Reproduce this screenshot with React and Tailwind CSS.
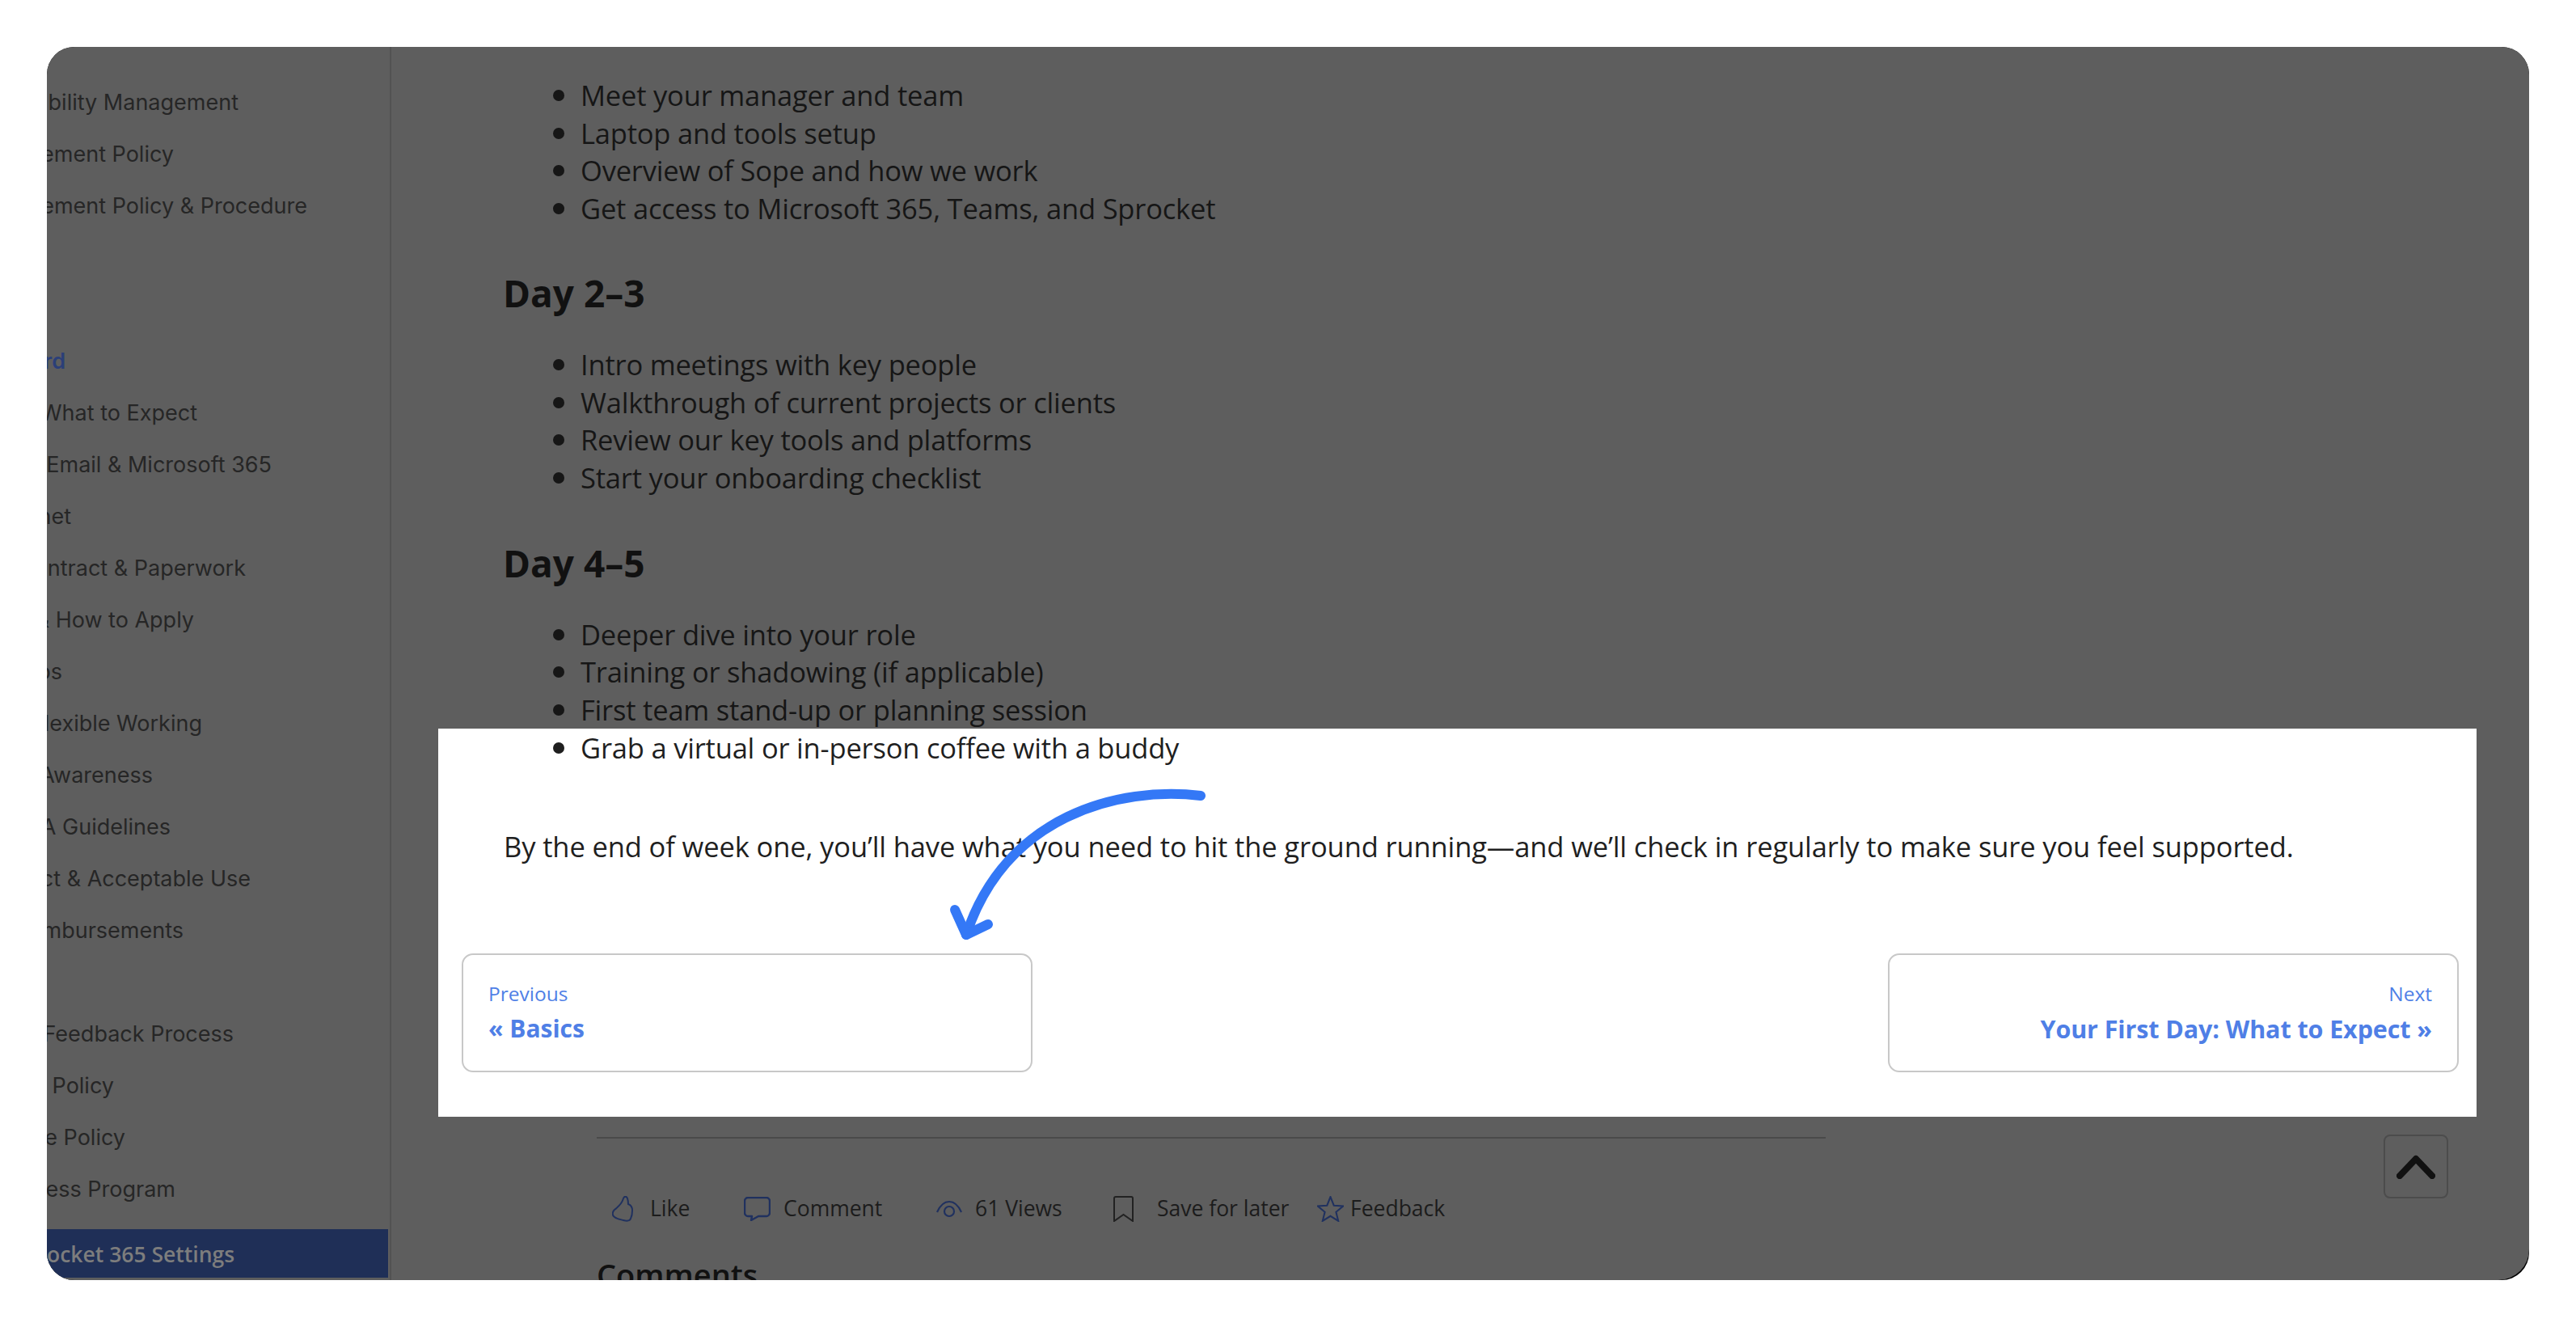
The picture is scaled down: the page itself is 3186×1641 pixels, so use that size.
const body = '"Open Sans","Noto Sans",sans-serif';

const rows = [
  ['bility Management', 'w-[237px]'],
  ['ement Policy', 'w-[157px]'],
  ['ement Policy & Procedure', 'w-[322px]'],
  ['', 'w-[10px]'],
  ['', 'w-[10px]'],
  ['rd', 'w-[23px] font-semibold text-[#2b3f78]'],
  ['What to Expect', 'w-[186px]'],
  ['Email & Microsoft 365', 'w-[278px]'],
  ['net', 'w-[30px]'],
  ['ntract & Paperwork', 'w-[246px]'],
  ['& How to Apply', 'w-[182px]'],
  ['ps', 'w-[19px]'],
  ['lexible Working', 'w-[192px]'],
  ['Awareness', 'w-[131px]'],
  ['A Guidelines', 'w-[153px]'],
  ['ct & Acceptable Use', 'w-[252px]'],
  ['mbursements', 'w-[169px]'],
  ['', 'w-[10px]'],
  ['Feedback Process', 'w-[231px]'],
  ['Policy', 'w-[83px]'],
  ['e Policy', 'w-[97px]'],
  ['ess Program', 'w-[159px]'],
];

function Li({ children }) {
  return (
    <li className="flex h-[46.5px] items-center">
      <span className="ml-[60px] mr-[20px] h-[14px] w-[14px] shrink-0 rounded-full bg-current" />
      <span>{children}</span>
    </li>
  );
}

function Action({ icon, label, className }) {
  return (
    <div className={'flex items-center ' + className}>
      {icon}
      <span>{label}</span>
    </div>
  );
}

const navy = '#20315f';

export default function App() {
  return (
    <div className="h-[1641px] w-[3186px] overflow-hidden bg-white pl-[58px] pt-[58px]">
      <div className="h-[1525px] w-[3070px] overflow-hidden rounded-[34px] bg-black">
        <div className="flex h-full w-full overflow-hidden rounded-br-[38px] bg-[#5e5e5e]">
          <aside className="flex w-[426px] shrink-0 flex-col border-r-2 border-[#525252] pb-[3px] pt-[37px] text-[27px] text-[#262626]" style={{ fontFamily: 'Inter, sans-serif' }}>
            {rows.map(([t, c], i) => (
              <div key={i} className={'flex h-[64px] items-center justify-end overflow-hidden whitespace-nowrap ' + c}>
                <span className="shrink-0">{t}</span>
              </div>
            ))}
            <div className="mr-[2px] mt-auto flex h-[60px] items-center overflow-hidden whitespace-nowrap bg-[#1f2f57] pt-[3px] text-[26.5px] font-semibold text-[#7d7d7d]">
              <span style={{ fontFamily: body }}>ocket 365 Settings</span>
            </div>
          </aside>

          <main className="relative min-w-0 flex-1 pl-[140px] pt-[37px] text-[34.5px] tracking-[-0.2px] text-[#161616]" style={{ fontFamily: body }}>
            <ul>
              <Li>Meet your manager and team</Li>
              <Li>Laptop and tools setup</Li>
              <Li>Overview of Sope and how we work</Li>
              <Li>Get access to Microsoft 365, Teams, and Sprocket</Li>
            </ul>
            <h3 className="-ml-[2px] mt-[51px] h-[60px] text-[46px] font-bold leading-[60px] tracking-normal text-[#111]">Day 2–3</h3>
            <ul className="mt-[36px]">
              <Li>Intro meetings with key people</Li>
              <Li>Walkthrough of current projects or clients</Li>
              <Li>Review our key tools and platforms</Li>
              <Li>Start your onboarding checklist</Li>
            </ul>
            <h3 className="-ml-[2px] mt-[52px] h-[60px] text-[46px] font-bold leading-[60px] tracking-normal text-[#111]">Day 4–5</h3>
            <ul className="mt-[35.5px]">
              <Li>Deeper dive into your role</Li>
              <Li>Training or shadowing (if applicable)</Li>
              <Li>First team stand-up or planning session</Li>
            </ul>

            <section className="-ml-[82px] h-[480px] w-[2521px] bg-white pl-[82px] text-[#1f1f1f]">
              <ul className="pt-[1px]">
                <Li>Grab a virtual or in-person coffee with a buddy</Li>
              </ul>
              <p className="-ml-[1px] mt-[75px] leading-[46px] tracking-[-0.12px]">By the end of week one, you’ll have what you need to hit the ground running—and we’ll check in regularly to make sure you feel supported.</p>
              <div className="-ml-[53px] mt-[109px] flex w-[2470px] justify-between tracking-normal">
                <div className="flex h-[147px] w-[706px] flex-col justify-center rounded-[14px] border-2 border-[#c8c8c8] px-[31px] text-[#4f7fe6]">
                  <span className="text-[24.5px] leading-[36px]">Previous</span>
                  <span className="mt-[4px] text-[30px] font-bold leading-[42px]">« Basics</span>
                </div>
                <div className="flex h-[147px] w-[706px] flex-col justify-center rounded-[14px] border-2 border-[#c8c8c8] px-[31px] text-right text-[#4f7fe6]">
                  <span className="text-[24.5px] leading-[36px]">Next</span>
                  <span className="mt-[4px] text-[30.5px] font-bold leading-[42px] tracking-[-0.1px]">Your First Day: What to Expect »</span>
                </div>
              </div>
            </section>

            <div className="ml-[114px] mt-[25px] h-[2px] w-[1520px] bg-[#4a4a4a]" />

            <div className="ml-[133px] mt-[62px] flex h-[50px] items-center text-[26.5px] tracking-normal text-[#1c1c1c]">
              <Action className="w-[163px] gap-[20px]" label="Like" icon={
                <svg width="27" height="32" viewBox="0 0 27 32" fill="none" stroke={navy} strokeWidth="2"><path d="M14 3C15 0 18 0 19 3C20 6 20 8 20 10C23 11 25 14 25 18C25 22 24 26 23 28C22 31 18 31 14 30C10 29 5 28 3 26C0 24 0 20 3 17C7 14 12 10 14 3Z" /></svg>
              } />
              <Action className="w-[238px] gap-[16px]" label="Comment" icon={
                <svg width="33" height="30" viewBox="0 0 33 30" fill="none" stroke={navy} strokeWidth="2.4" strokeLinejoin="round"><path d="M5 1h23c2 0 4 2 4 4v15c0 2-2 4-4 4H18l-9 5 1-5H5c-2 0-4-2-4-4V5c0-2 2-4 4-4Z" /></svg>
              } />
              <Action className="w-[219px] gap-[16px]" label="61 Views" icon={
                <svg width="32" height="22" viewBox="0 0 32 22" fill="none" stroke={navy} strokeWidth="2.2"><path d="M1 15C5 6 10 2 16 2C22 2 27 6 31 15" /><circle cx="16" cy="14" r="6" /></svg>
              } />
              <Action className="w-[252px] gap-[29px]" label="Save for later" icon={
                <svg width="25" height="32" viewBox="0 0 25 32" fill="none" stroke="#222" strokeWidth="2"><path d="M1 31V3c0-1 1-2 2-2h19c1 0 2 1 2 2v28l-11.500-8Z" /></svg>
              } />
              <Action className="gap-[8px]" label="Feedback" icon={
                <svg width="33" height="32" viewBox="0 0 32 31" fill="none" stroke={navy} strokeWidth="2"><path d="M16 1 20.100 11.300 31.200 12.100 22.700 19.200 25.400 29.900 16 24 6.600 29.900 9.300 19.200.8 12.100 11.900 11.300Z" /></svg>
              } />
            </div>
            <h3 className="ml-[114px] mt-[30px] whitespace-nowrap text-[38px] font-semibold leading-[52px] tracking-normal text-[#111]">Comments</h3>

            <div className="absolute left-[2464px] top-[1345px] flex h-[79px] w-[80px] items-center justify-center rounded-[8px] border-2 border-[#4c4c4c]">
              <svg width="48" height="30" viewBox="0 0 48 30" fill="none" stroke="#111" strokeWidth="8" strokeLinecap="round" strokeLinejoin="round"><path d="M4 26 24 5l20 21" /></svg>
            </div>

            <svg className="absolute left-[680px] top-[900px]" width="340" height="220" viewBox="0 0 340 220" fill="none" stroke="#3478f6" strokeWidth="12" strokeLinecap="round" strokeLinejoin="round">
              <path d="M321 26C220 14 80 50 31 198" />
              <path d="M17 167 31 198 58 185" />
            </svg>
          </main>
        </div>
      </div>
    </div>
  );
}
